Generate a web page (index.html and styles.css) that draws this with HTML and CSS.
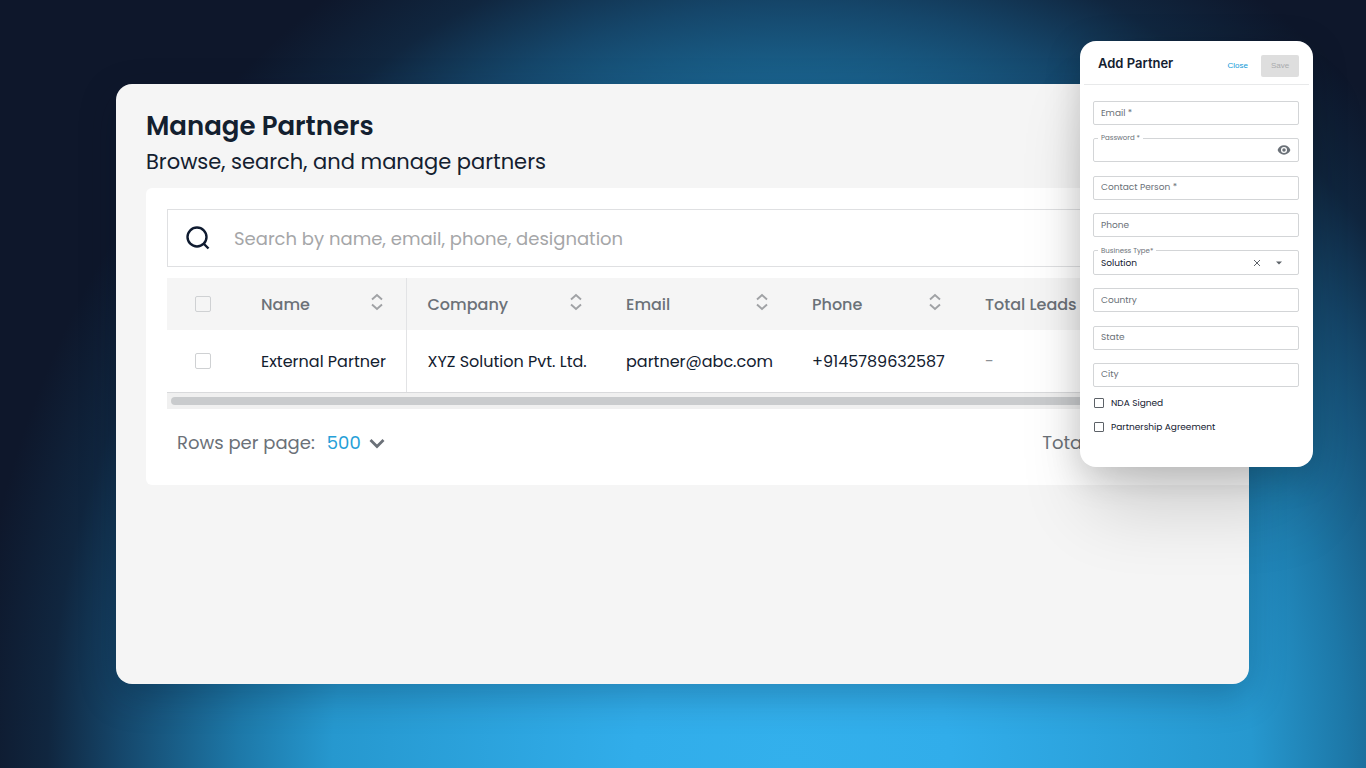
FILE: index.html
```html
<!DOCTYPE html>
<html lang="en">
<head>
  <meta charset="utf-8">
  <meta name="viewport" content="width=device-width, initial-scale=1">
  <title>Manage Partners</title>
  <link rel="stylesheet" href="styles.css">
</head>

<body>
  <svg class="defs" width="0" height="0" aria-hidden="true">
    <symbol id="sort" viewBox="0 0 12 18">
      <path d="M1 6.500 L6 2 L11 6.500 M1 11.500 L6 16 L11 11.500" fill="none" stroke="#a0a2a5" stroke-width="1.900"/>
    </symbol>
  </svg>

  <main class="page">
    <h1>Manage Partners</h1>
    <p class="subtitle">Browse, search, and manage partners</p>

    <section class="panel">
      <label class="search">
        <svg width="24" height="24" viewBox="0 0 24 24" fill="none" stroke="#0f1b30" stroke-width="2.400" aria-hidden="true">
          <circle cx="11" cy="11" r="9.500"/>
          <path d="M17.500 17.500 L22.500 22.500"/>
        </svg>
        <input type="search" placeholder="Search by name, email, phone, designation" aria-label="Search partners">
      </label>

      <div class="table-wrap">
        <table>
          <colgroup>
            <col class="col-check">
            <col class="col-name">
            <col class="col-company">
            <col class="col-email">
            <col class="col-phone">
            <col>
          </colgroup>
          <thead>
            <tr>
              <th><input type="checkbox" class="check" aria-label="Select all"></th>
              <th class="pinned"><div class="head">Name <svg class="sort"><use href="#sort"/></svg></div></th>
              <th><div class="head">Company <svg class="sort"><use href="#sort"/></svg></div></th>
              <th><div class="head">Email <svg class="sort"><use href="#sort"/></svg></div></th>
              <th><div class="head">Phone <svg class="sort"><use href="#sort"/></svg></div></th>
              <th><div class="head">Total Leads</div></th>
            </tr>
          </thead>
          <tbody>
            <tr>
              <td><input type="checkbox" class="check" aria-label="Select External Partner"></td>
              <td class="pinned">External Partner</td>
              <td>XYZ Solution Pvt. Ltd.</td>
              <td>partner@abc.com</td>
              <td>+9145789632587</td>
              <td class="empty">-</td>
            </tr>
          </tbody>
        </table>
        <div class="scrollbar"><div class="thumb"></div></div>
      </div>

      <div class="pager">
        <label for="rows">Rows per page:</label>
        <div class="rows">
          <select id="rows">
            <option>500</option>
          </select>
          <svg width="16" height="11" viewBox="0 0 16 11" aria-hidden="true">
            <path d="M1.500 2 L8 8.500 L14.500 2" fill="none" stroke="#6b7178" stroke-width="2.800"/>
          </svg>
        </div>
        <span class="total">Total: 1</span>
      </div>
    </section>
  </main>

  <form class="dialog">
    <header class="dialog-head">
      <h2>Add Partner</h2>
      <button type="button" class="close">Close</button>
      <button type="submit" class="save" disabled>Save</button>
    </header>

    <div class="fields">
      <input class="field" type="email" placeholder="Email *" aria-label="Email">

      <fieldset class="field outlined">
        <legend><label for="password">Password *</label></legend>
        <input id="password" type="password">
        <button type="button" class="icon" aria-label="Show password">
          <svg width="14" height="14" viewBox="0 0 24 24" aria-hidden="true">
            <path fill="#6b7178" d="M12 4C7 4 2.700 7.300 1 12c1.700 4.700 6 8 11 8s9.300-3.300 11-8c-1.700-4.700-6-8-11-8zm0 13.200a5.200 5.200 0 1 1 0-10.400 5.200 5.200 0 0 1 0 10.400zm0-8.200a3 3 0 1 0 0 6 3 3 0 0 0 0-6z"/>
          </svg>
        </button>
      </fieldset>

      <input class="field" type="text" placeholder="Contact Person *" aria-label="Contact Person">
      <input class="field" type="tel" placeholder="Phone" aria-label="Phone">

      <fieldset class="field outlined">
        <legend><label for="business">Business Type*</label></legend>
        <select id="business">
          <option>Solution</option>
        </select>
        <button type="button" class="icon clear" aria-label="Clear">
          <svg width="8" height="8" viewBox="0 0 8 8" aria-hidden="true">
            <path d="M1 1 L7 7 M7 1 L1 7" stroke="#5d6268" stroke-width="1"/>
          </svg>
        </button>
        <svg class="arrow" width="6" height="4" viewBox="0 0 6 4" aria-hidden="true">
          <path d="M0 0.500 H6 L3 3.500 Z" fill="#5d6268"/>
        </svg>
      </fieldset>

      <input class="field" type="text" placeholder="Country" aria-label="Country">
      <input class="field" type="text" placeholder="State" aria-label="State">
      <input class="field" type="text" placeholder="City" aria-label="City">
    </div>

    <div class="checks">
      <label><input type="checkbox" class="check small"> NDA Signed</label>
      <label><input type="checkbox" class="check small"> Partnership Agreement</label>
    </div>
  </form>
</body>
</html>
```
FILE: styles.css
```css
* {
  box-sizing: border-box;
}

body {
  margin: 0;
  min-height: 100vh;
  padding: 84px 117px 84px 116px;
  display: flex;
  font-family: Poppins, Inter, sans-serif;
  color: #13202f;
  background: radial-gradient(ellipse 58% 117% at 58% 100%, #33b0ec 0%, #31adea 20%, #2698cf 58%, #1d78a8 70%, #15466a 85%, #10263f 94%, #0e172b 104%) #0e172b;
}

input,
select,
button {
  font: inherit;
  color: inherit;
}

.defs {
  position: absolute;
}

.page {
  flex: 1;
  min-width: 0;
  padding: 24px 0 0 30px;
  background: #f5f5f5;
  border-radius: 16px;
  box-shadow: 0 12px 36px rgba(0, 20, 40, 0.25);
  overflow: hidden;
}

h1 {
  margin: 0;
  font-size: 26px;
  line-height: 36px;
  font-weight: 600;
}

.subtitle {
  margin: 0;
  font-size: 21px;
  line-height: 36px;
}

.panel {
  margin-top: 8px;
  padding: 21px 0 24px 21px;
  background: #fff;
  border-radius: 6px 0 0 6px;
}

.search {
  display: flex;
  align-items: center;
  gap: 24px;
  height: 58px;
  padding-left: 18px;
  border: 1px solid #dfe0e2;
  border-right: 0;
}

.search input {
  flex: 1;
  padding: 0;
  border: 0;
  outline: 0;
  background: none;
  font-size: 18px;
}

.search input::placeholder {
  color: #a5a6a8;
}

/* table */
.table-wrap {
  margin-top: 11px;
  overflow: hidden;
}

table {
  width: 100%;
  table-layout: fixed;
  border-collapse: collapse;
  font-size: 16px;
}

.col-check { width: 73px; }
.col-name { width: 166px; }
.col-company { width: 199px; }
.col-email { width: 186px; }
.col-phone { width: 173px; }

th,
td {
  padding: 0 0 0 21px;
  text-align: left;
  white-space: nowrap;
}

th:first-child,
td:first-child {
  padding-left: 28px;
}

th {
  height: 52px;
  background: #f5f5f5;
  color: #6b7178;
  font-weight: 500;
}

td {
  height: 62px;
}

.pinned {
  border-right: 1px solid #e2e3e5;
}

.empty {
  color: #8b8f94;
}

.head {
  display: flex;
  align-items: center;
  justify-content: space-between;
  padding-right: 23px;
}

.sort {
  width: 12px;
  height: 18px;
  margin-bottom: 4px;
}

.check {
  appearance: none;
  display: block;
  width: 16px;
  height: 16px;
  margin: 0;
  border: 1px solid #cfd1d3;
  border-radius: 2px;
}

.scrollbar {
  padding: 4px 0 4px 4px;
  border-top: 1px solid #d9dadc;
  background: #f0f0f0;
}

.thumb {
  height: 8px;
  border-radius: 4px;
  background: #c9cbcd;
}

.pager {
  display: flex;
  align-items: center;
  margin-top: 16px;
  padding-left: 10px;
  font-size: 18px;
  line-height: 36px;
  color: #6b7178;
}

.rows {
  display: flex;
  align-items: center;
  gap: 8px;
  margin-left: 12px;
}

.rows select {
  appearance: none;
  padding: 0;
  border: 0;
  background: none;
  color: #259fd8;
}

.total {
  margin-left: auto;
  padding-right: 148px;
}

/* add partner dialog, floats over the page */
.dialog {
  position: absolute;
  top: 41px;
  right: 53px;
  width: 233px;
  padding-bottom: 32px;
  background: #fff;
  border-radius: 16px;
  box-shadow: 0 52px 72px -12px rgba(0, 0, 0, 0.16), 0 8px 36px rgba(0, 0, 0, 0.18);
  font-size: 9px;
}

.dialog-head {
  display: flex;
  align-items: center;
  height: 44px;
  margin: 0 4px;
  padding: 6px 10px 0 14px;
  border-bottom: 1px solid #e8e9ea;
}

.dialog-head h2 {
  flex: 1;
  margin: 0;
  padding-bottom: 6px;
  font-family: Inter, sans-serif;
  font-size: 13px;
  line-height: 16px;
  font-weight: 600;
}

.close,
.save {
  height: 22px;
  border: 0;
  border-radius: 2px;
  font-family: "Liberation Sans", sans-serif;
  font-size: 8px;
}

.close {
  padding: 0 13px;
  background: none;
  color: #0f9ad8;
}

.save {
  width: 38px;
  padding: 0;
  background: #dedede;
  color: #a9abad;
}

.fields {
  display: grid;
  align-content: space-between;
  height: 302px;
  padding: 16px 14px 0 13px;
}

.field {
  width: 100%;
  height: 24px;
  margin: 0;
  padding: 0 7px;
  border: 1px solid #d3d5d7;
  border-radius: 2px;
  outline: 0;
  background: none;
}

.field::placeholder {
  color: #6b7178;
}

.outlined {
  display: flex;
  align-items: center;
  min-width: 0;
  height: 28px;
  margin-top: -4px;
  padding: 0 7px 3px 4px;
}

.outlined legend {
  padding: 0 3px;
  font-size: 7px;
  line-height: 8px;
  color: #6b7178;
}

.outlined input,
.outlined select {
  appearance: none;
  flex: 1;
  min-width: 0;
  height: 16px;
  padding: 0 3px;
  border: 0;
  outline: 0;
  background: none;
}

.icon {
  display: flex;
  padding: 0;
  border: 0;
  background: none;
}

.clear {
  margin-right: 15px;
}

.arrow {
  margin-right: 9px;
}

.checks {
  display: grid;
  gap: 8px;
  padding: 8px 14px 0;
}

.checks label {
  display: flex;
  align-items: center;
  gap: 7px;
  line-height: 16px;
}

.small {
  width: 10px;
  height: 10px;
  border-color: #5d6268;
  border-radius: 1px;
}
```
